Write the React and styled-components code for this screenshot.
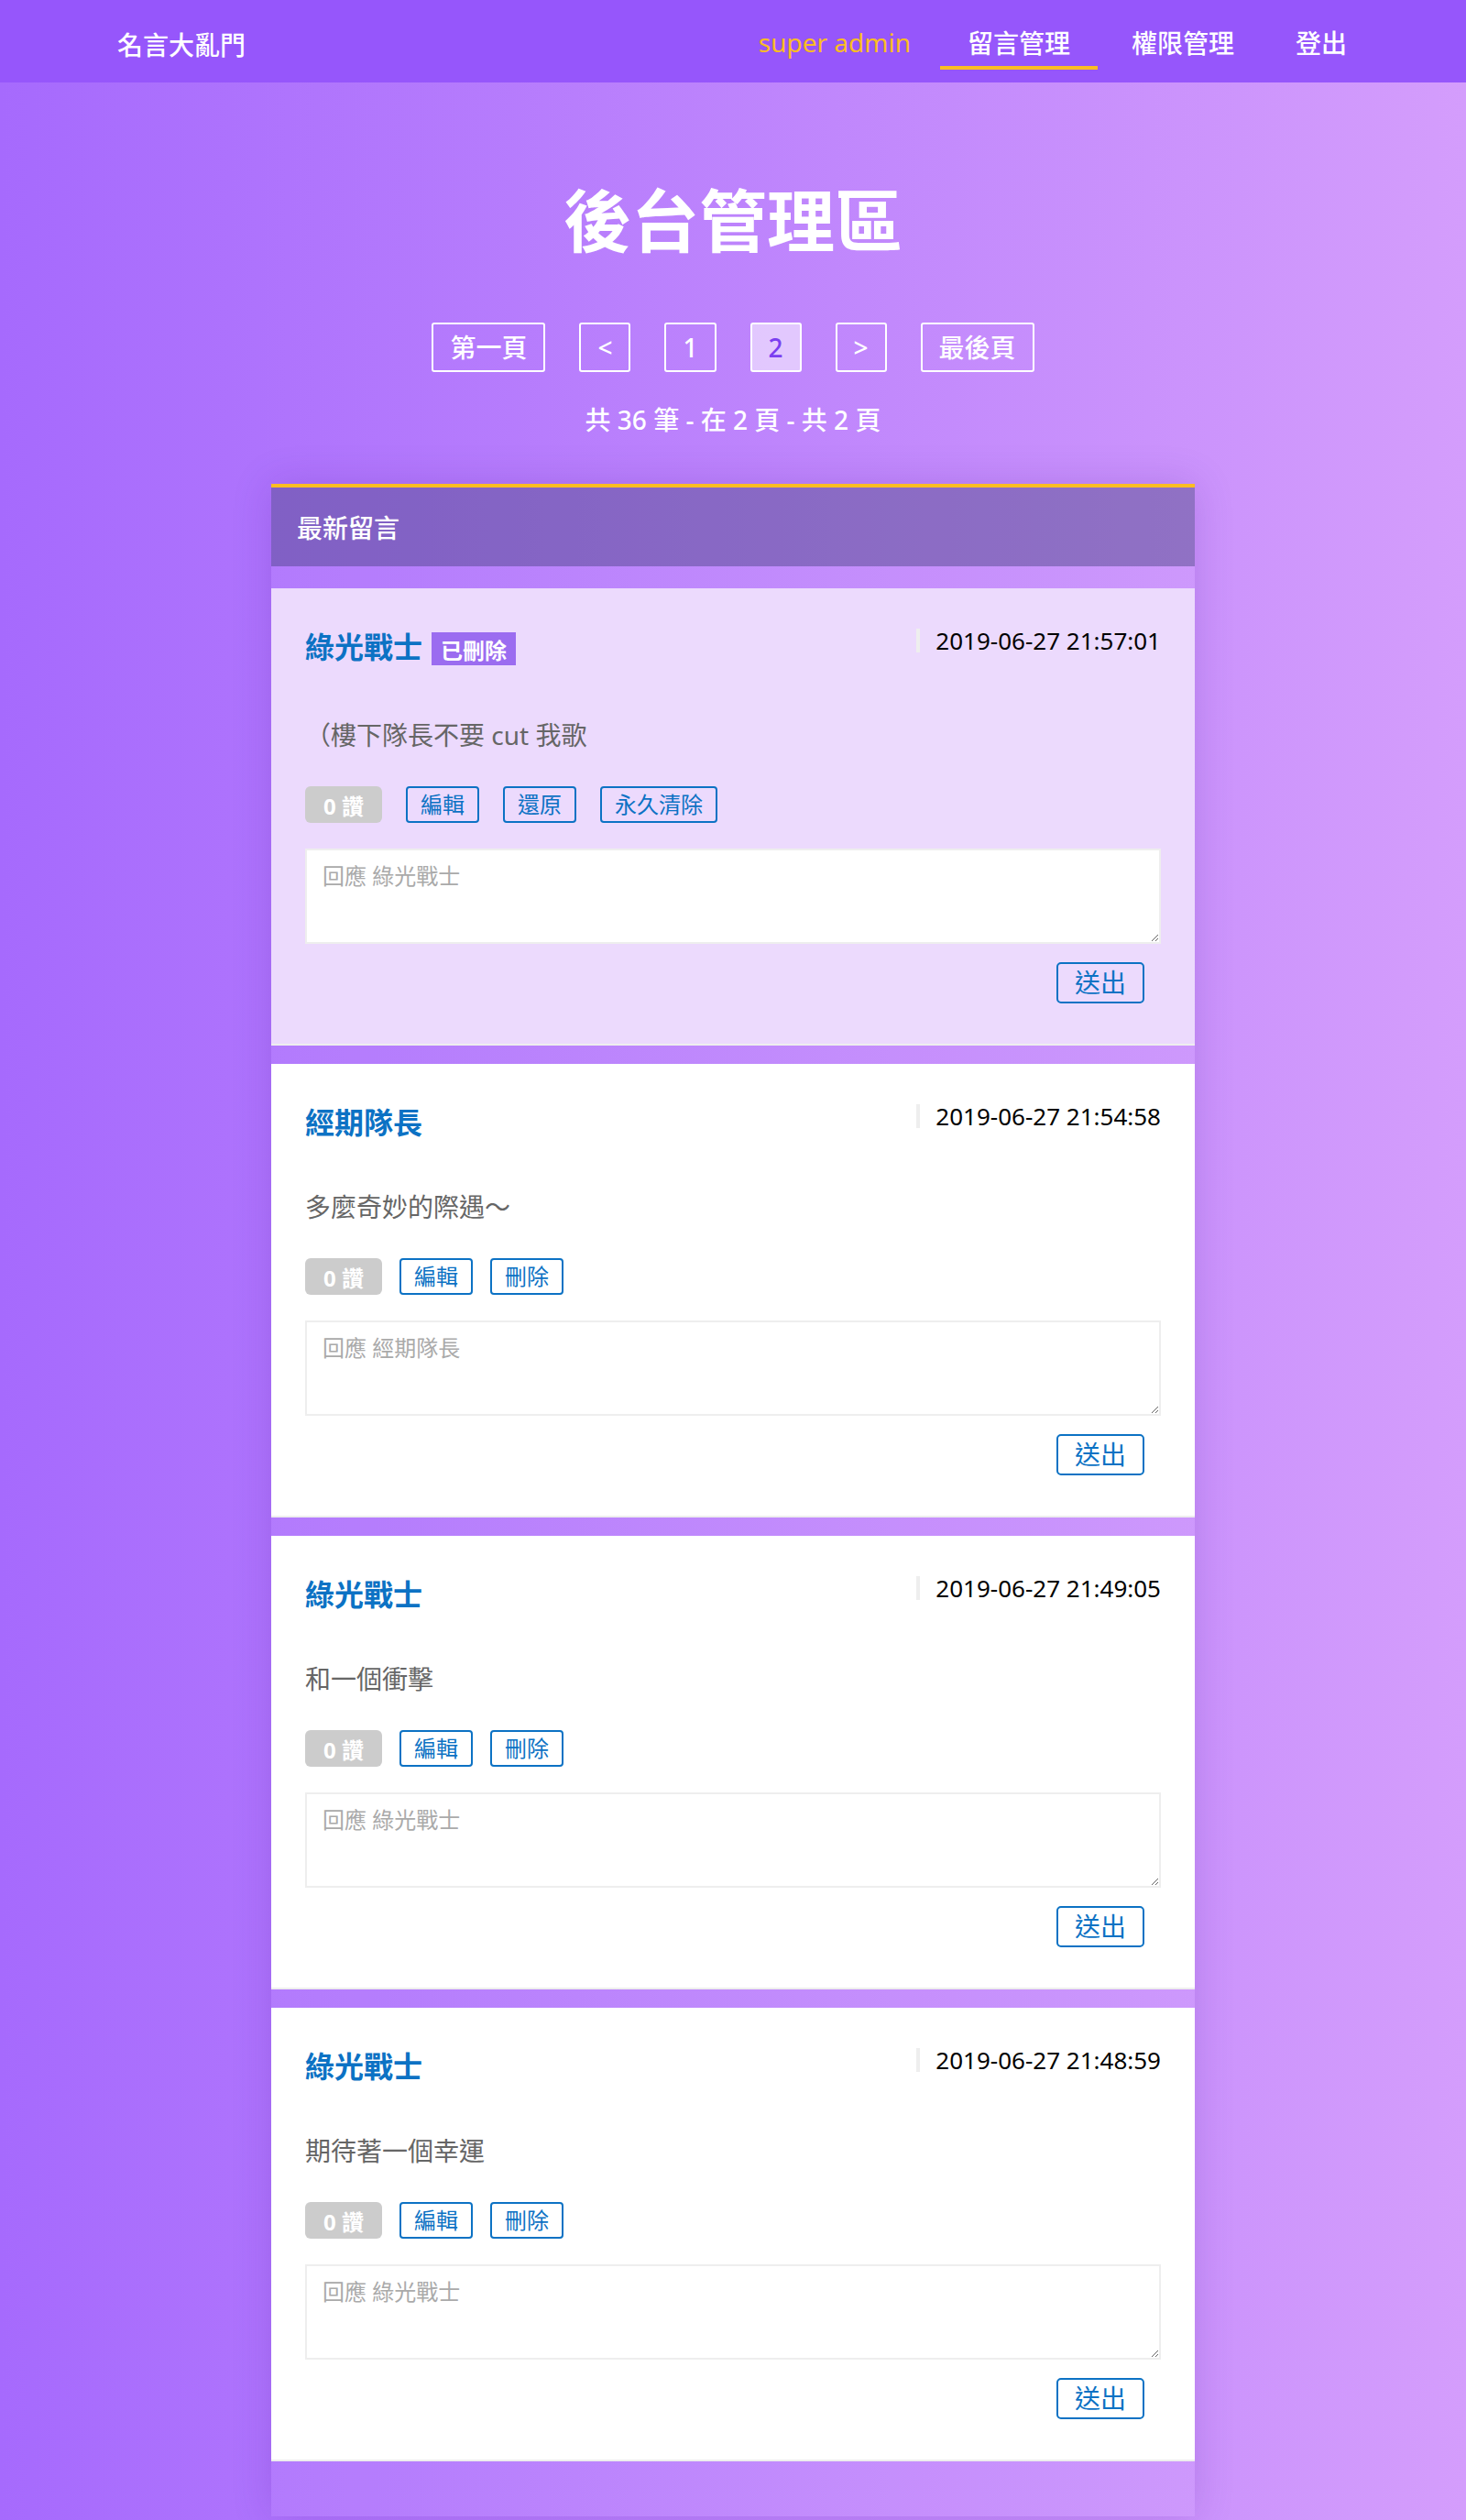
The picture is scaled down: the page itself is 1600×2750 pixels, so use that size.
import React from 'react';
import styled, { createGlobalStyle } from 'styled-components';

const FONT = `"Noto Sans", "Noto Sans CJK TC", sans-serif`;

const COLORS = {
  header: '#9656fb',
  gold: '#fbbd22',
  blue: '#0c72c4',
  text: '#666',
  lavender: '#ecdafd',
  badge: '#9b6cf0',
};

const GlobalStyle = createGlobalStyle`
  * { box-sizing: border-box; }
  body {
    margin: 0;
    font-family: ${FONT};
    background: linear-gradient(90deg, #a66afd 0%, #d49dfc 100%);
    min-height: 2750px;
  }
`;

const messages = [
  { id: 1, name: '綠光戰士', time: '2019-06-27 21:57:01', content: '（樓下隊長不要 cut 我歌', deleted: true },
  { id: 2, name: '經期隊長', time: '2019-06-27 21:54:58', content: '多麼奇妙的際遇～' },
  { id: 3, name: '綠光戰士', time: '2019-06-27 21:49:05', content: '和一個衝擊' },
  { id: 4, name: '綠光戰士', time: '2019-06-27 21:48:59', content: '期待著一個幸運' },
];

const pages = ['第一頁', '<', '1', '2', '>', '最後頁'];

const MessageCard = ({ message }) => {
  const { name, time, content, deleted } = message;
  return (
    <Card $deleted={deleted}>
      <CardTop>
        <NameRow>
          <Name>{name}</Name>
          {deleted && <Badge>已刪除</Badge>}
        </NameRow>
        <Time>{time}</Time>
      </CardTop>
      <Content>{content}</Content>
      <Actions $wide={deleted}>
        <LikeButton>0 讚</LikeButton>
        <OutlineButton>編輯</OutlineButton>
        {deleted ? (
          <>
            <OutlineButton>還原</OutlineButton>
            <OutlineButton>永久清除</OutlineButton>
          </>
        ) : (
          <OutlineButton>刪除</OutlineButton>
        )}
      </Actions>
      <Reply placeholder={`回應 ${name}`} />
      <SendRow>
        <SendButton>送出</SendButton>
      </SendRow>
    </Card>
  );
};

const App = () => {
  return (
    <>
      <GlobalStyle />
      <Header>
        <Logo>名言大亂門</Logo>
        <Nav>
          <UserName>super admin</UserName>
          <NavItem $active>留言管理</NavItem>
          <NavItem>權限管理</NavItem>
          <NavItem>登出</NavItem>
        </Nav>
      </Header>

      <Main>
        <Title>後台管理區</Title>
        <Pagination>
          {pages.map((p) => (
            <PageButton key={p} $active={p === '2'}>{p}</PageButton>
          ))}
        </Pagination>
        <PageInfo>共 36 筆 - 在 2 頁 - 共 2 頁</PageInfo>

        <Board>
          <BoardHeader>最新留言</BoardHeader>
          <CardList>
            {messages.map((m) => (
              <MessageCard message={m} key={m.id} />
            ))}
          </CardList>
        </Board>
      </Main>
    </>
  );
};

const Header = styled.header`
  height: 90px;
  background: ${COLORS.header};
  display: flex;
  justify-content: space-between;
  align-items: flex-start;
  padding: 0 100px 0 128px;
`;

const Logo = styled.div`
  height: 76px;
  padding-top: 20px;
  display: flex;
  align-items: center;
  color: #fff;
  font-size: 28px;
  font-weight: 500;
`;

const Nav = styled.nav`
  display: flex;
  align-items: flex-start;
`;

const NavItem = styled.a`
  height: 76px;
  padding: 20px 30px 0;
  margin-left: 7px;
  display: flex;
  align-items: center;
  font-size: 28px;
  font-weight: 500;
  color: #fff;
  border-bottom: 4px solid ${(p) => (p.$active ? COLORS.gold : 'transparent')};
  cursor: pointer;
`;

const UserName = styled(NavItem)`
  color: ${COLORS.gold};
  font-weight: 400;
  padding: 20px 25px 0;
  margin-left: 0;
`;

const Main = styled.main`
  display: flex;
  flex-direction: column;
  align-items: center;
  padding-top: 107px;
`;

const Title = styled.h1`
  margin: 0;
  font-size: 74px;
  line-height: 88px;
  font-weight: 700;
  color: #fff;
`;

const Pagination = styled.div`
  display: flex;
  gap: 37px;
  margin-top: 67px;
`;

const PageButton = styled.button`
  height: 54px;
  padding: 0 18px;
  border: 2px solid #fff;
  border-radius: 3px;
  background: ${(p) => (p.$active ? 'rgba(255, 255, 255, 0.55)' : 'transparent')};
  color: ${(p) => (p.$active ? '#7b3ff0' : '#fff')};
  font-family: ${FONT};
  font-size: 28px;
  font-weight: 500;
  line-height: 50px;
  cursor: pointer;
`;

const PageInfo = styled.div`
  margin-top: 32px;
  font-size: 28px;
  line-height: 40px;
  font-weight: 500;
  color: #fff;
`;

const Board = styled.section`
  width: 1008px;
  margin-top: 50px;
  border-top: 4px solid ${COLORS.gold};
  background: rgba(255, 255, 255, 0.05);
  box-shadow: 0 0 40px rgba(70, 20, 150, 0.18);
  padding-bottom: 60px;
`;

const BoardHeader = styled.div`
  height: 86px;
  display: flex;
  align-items: center;
  padding-left: 28px;
  background: rgba(60, 60, 120, 0.42);
  color: #fff;
  font-size: 28px;
  font-weight: 500;
`;

const CardList = styled.div`
  display: flex;
  flex-direction: column;
  gap: 20px;
  padding-top: 24px;
`;

const Card = styled.article`
  background: ${(p) => (p.$deleted ? COLORS.lavender : '#fff')};
  border-bottom: 2px solid #eee;
  padding: 40px 37px 44px;
  display: flex;
  flex-direction: column;
`;

const CardTop = styled.div`
  display: flex;
  justify-content: space-between;
  align-items: flex-start;
`;

const NameRow = styled.div`
  display: flex;
  align-items: flex-start;
`;

const Name = styled.span`
  font-size: 32px;
  line-height: 48px;
  font-weight: 700;
  color: ${COLORS.blue};
`;

const Badge = styled.span`
  margin: 8px 0 8px 10px;
  height: 36px;
  padding: 0 10px;
  display: flex;
  align-items: center;
  background: ${COLORS.badge};
  color: #fff;
  font-size: 24px;
  font-weight: 700;
`;

const Time = styled.span`
  margin-top: 4px;
  border-left: 4px solid #eee;
  padding-left: 17px;
  font-family: "Noto Sans", sans-serif;
  font-size: 26px;
  line-height: 26px;
  color: #000;
`;

const Content = styled.p`
  margin: 47px 0 0;
  font-size: 28px;
  line-height: 42px;
  font-weight: 400;
  color: ${COLORS.text};
`;

const Actions = styled.div`
  display: flex;
  gap: ${(p) => (p.$wide ? '26px' : '19px')};
  margin-top: 35px;
`;

const LikeButton = styled.button`
  height: 40px;
  padding: 0 20px;
  border: none;
  border-radius: 6px;
  background: #ccc;
  color: #fff;
  font-family: ${FONT};
  font-size: 24px;
  font-weight: 700;
  cursor: pointer;
`;

const OutlineButton = styled.button`
  height: 40px;
  padding: 0 14px;
  border: 2px solid ${COLORS.blue};
  border-radius: 4px;
  background: transparent;
  color: ${COLORS.blue};
  font-family: ${FONT};
  font-size: 24px;
  font-weight: 400;
  line-height: 36px;
  cursor: pointer;
`;

const Reply = styled.textarea`
  display: block;
  width: 100%;
  height: 104px;
  margin-top: 28px;
  padding: 10px 17px;
  border: 2px solid #eee;
  background: #fff;
  font-family: ${FONT};
  font-size: 24px;
  line-height: 36px;
  color: #333;
  resize: vertical;
  &::placeholder {
    color: #aaa;
  }
`;

const SendRow = styled.div`
  display: flex;
  justify-content: flex-end;
  margin-top: 20px;
  padding-right: 18px;
`;

const SendButton = styled.button`
  height: 45px;
  padding: 0 18px;
  border: 2px solid ${COLORS.blue};
  border-radius: 5px;
  background: transparent;
  color: ${COLORS.blue};
  font-family: ${FONT};
  font-size: 28px;
  line-height: 41px;
  cursor: pointer;
`;

export default App;
